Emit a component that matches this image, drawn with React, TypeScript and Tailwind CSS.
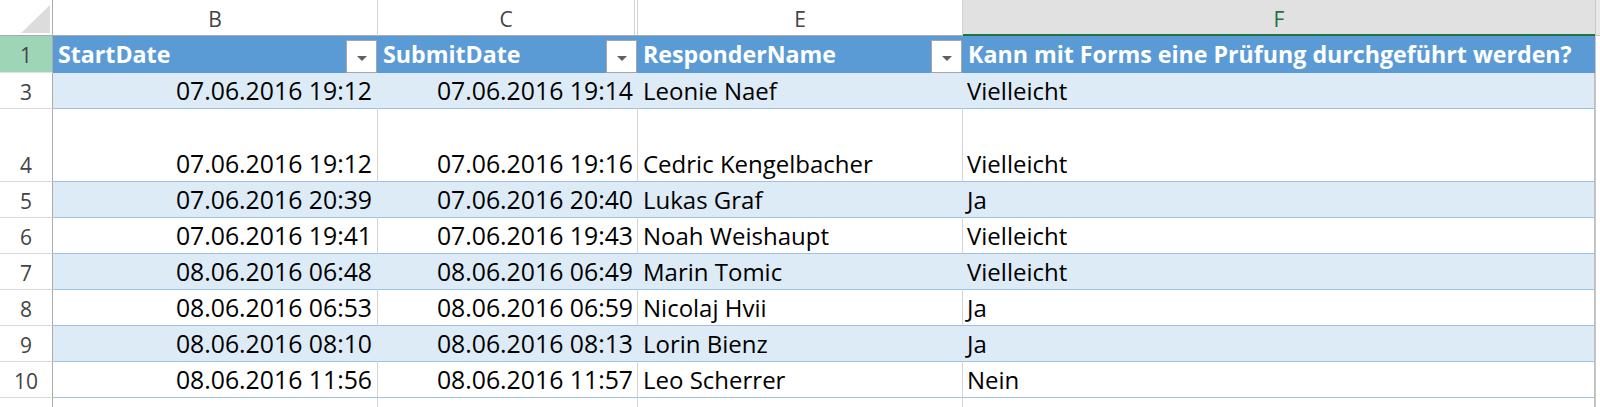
const rows = [
  { n: "3", start: "07.06.2016 19:12", submit: "07.06.2016 19:14", name: "Leonie Naef", answer: "Vielleicht", band: true, h: "h-[36px]" },
  { n: "4", start: "07.06.2016 19:12", submit: "07.06.2016 19:16", name: "Cedric Kengelbacher", answer: "Vielleicht", band: false, h: "h-[73px]" },
  { n: "5", start: "07.06.2016 20:39", submit: "07.06.2016 20:40", name: "Lukas Graf", answer: "Ja", band: true, h: "h-[36px]" },
  { n: "6", start: "07.06.2016 19:41", submit: "07.06.2016 19:43", name: "Noah Weishaupt", answer: "Vielleicht", band: false, h: "h-[36px]" },
  { n: "7", start: "08.06.2016 06:48", submit: "08.06.2016 06:49", name: "Marin Tomic", answer: "Vielleicht", band: true, h: "h-[36px]" },
  { n: "8", start: "08.06.2016 06:53", submit: "08.06.2016 06:59", name: "Nicolaj Hvii", answer: "Ja", band: false, h: "h-[36px]" },
  { n: "9", start: "08.06.2016 08:10", submit: "08.06.2016 08:13", name: "Lorin Bienz", answer: "Ja", band: true, h: "h-[36px]" },
  { n: "10", start: "08.06.2016 11:56", submit: "08.06.2016 11:57", name: "Leo Scherrer", answer: "Nein", band: false, h: "h-[36px]" },
];

function FilterButton() {
  return (
    <div className="flex h-[33px] w-[31px] shrink-0 items-center justify-center border border-[#a6a6a6] bg-white pt-[3px]">
      <svg width="10" height="5" viewBox="0 0 10 5">
        <polygon points="0,0 10,0 5,5" fill="#5f5f5f" />
      </svg>
    </div>
  );
}

function HeaderCell({ w, label, filter }: { w: string; label: string; filter: boolean }) {
  return (
    <div className={`flex ${w} shrink-0 items-end bg-[#5b9bd5] pr-[1px]`}>
      <div className="flex-1 whitespace-nowrap pb-[7px] pl-[5px] text-[23.2px] font-bold leading-none text-white">
        {label}
      </div>
      {filter && <FilterButton />}
    </div>
  );
}

export default function App() {
  return (
    <div className="flex h-[407px] w-[1600px] overflow-hidden bg-white font-['Open_Sans',sans-serif] text-black">
      <div className="flex w-[1595px] shrink-0 flex-col">
        {/* column letters */}
        <div className="flex h-[36px] shrink-0 text-[21px] leading-none text-[#444]">
          <div className="flex w-[53px] shrink-0 items-end justify-end border-r border-b border-[#ababab] pr-[2px] pb-[2px]">
            <svg width="29" height="28" viewBox="0 0 29 28">
              <polygon points="29,0 29,28 0,28" fill="#dcdcdc" />
            </svg>
          </div>
          <div className="flex w-[325px] shrink-0 items-end justify-center border-r border-b border-r-[#d4d4d4] border-b-[#ababab] pb-[5px]">
            B
          </div>
          <div className="flex w-[260px] shrink-0 border-b border-[#ababab]">
            <div className="flex flex-1 items-end justify-center border-r border-[#d4d4d4] pb-[5px]">C</div>
            <div className="w-[2px]" />
            <div className="w-px bg-[#d4d4d4]" />
          </div>
          <div className="flex w-[325px] shrink-0 items-end justify-center border-r border-b border-r-[#d4d4d4] border-b-[#ababab] pb-[5px]">
            E
          </div>
          <div className="flex w-[632px] shrink-0 items-end justify-center border-b-2 border-[#217346] bg-[#e1e1e1] pb-[4px] text-[#217346]">
            F
          </div>
        </div>

        {/* table header */}
        <div className="flex h-[37px] shrink-0">
          <div className="flex w-[53px] shrink-0 items-end justify-center border-r border-b border-r-[#ababab] border-b-[#e1e1e1] bg-[#9fd5b7] pb-[6px] text-[21px] leading-none text-[#444]">
            1
          </div>
          <HeaderCell w="w-[325px]" label="StartDate" filter />
          <HeaderCell w="w-[260px]" label="SubmitDate" filter />
          <HeaderCell w="w-[325px]" label="ResponderName" filter />
          <HeaderCell w="w-[632px]" label="Kann mit Forms eine Prüfung durchgeführt werden?" filter={false} />
        </div>

        {/* rows */}
        {rows.map((r) => {
          const fill = r.band ? "bg-[#ddebf7] border-r-[#ddebf7]" : "bg-white border-r-[#d4d4d4]";
          return (
            <div key={r.n} className={`flex ${r.h} shrink-0 text-[24px] leading-none`}>
              <div className="flex w-[53px] shrink-0 items-end justify-center border-r border-b border-r-[#ababab] border-b-[#dadada] pb-[5px] text-[21px] text-[#444]">
                {r.n}
              </div>
              <div className={`flex w-[325px] shrink-0 items-end justify-end border-r border-b border-b-[#9bc2e6] pb-[5px] pr-[5px] text-[24.8px] ${fill}`}>
                {r.start}
              </div>
              <div className={`flex w-[260px] shrink-0 items-end justify-end border-r border-b border-b-[#9bc2e6] pb-[5px] pr-[4px] text-[24.8px] ${fill}`}>
                {r.submit}
              </div>
              <div className={`flex w-[325px] shrink-0 items-end whitespace-nowrap border-r border-b border-b-[#9bc2e6] pb-[5px] pl-[5px] ${fill}`}>
                {r.name}
              </div>
              <div
                className={`flex w-[632px] shrink-0 items-end border-r border-b border-b-[#9bc2e6] border-r-[#bfbfbf] pb-[5px] pl-[4px] ${r.band ? "bg-[#ddebf7]" : "bg-white"}`}
              >
                {r.answer}
              </div>
            </div>
          );
        })}

        {/* next empty row */}
        <div className="flex flex-1">
          <div className="w-[53px] shrink-0 border-r border-[#ababab]" />
          <div className="w-[325px] shrink-0 border-r border-[#d4d4d4]" />
          <div className="w-[260px] shrink-0 border-r border-[#d4d4d4]" />
          <div className="w-[325px] shrink-0 border-r border-[#d4d4d4]" />
          <div className="w-[632px] shrink-0 border-r border-[#bfbfbf]" />
        </div>
      </div>
      <div className="flex flex-1 flex-col">
        <div className="h-[36px] w-full border-b border-l border-[#c6c6c6] bg-[#e8e8e8]" />
        <div className="flex-1 border-l border-[#c6c6c6]" />
      </div>
    </div>
  );
}
